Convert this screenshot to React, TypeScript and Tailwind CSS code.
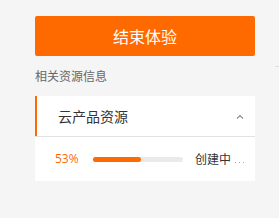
import React from 'react';

const cn = { fontFamily: '"Noto Sans CJK SC", "Noto Sans", sans-serif' };

const App: React.FC = () => {
  return (
    <div className="relative w-[279px] h-[218px] bg-[#f5f5f5] overflow-hidden" style={cn}>
      {/* bit of a divider peeking in from the right */}
      <div className="absolute right-0 top-[66px] w-[4px] h-px bg-[#dcdcdc]" />

      <div className="ml-[35px] w-[220px] pt-4">
        <button className="w-full h-10 rounded-[2px] bg-[#ff6a00] text-white text-base flex items-center justify-center">
          结束体验
        </button>

        <div className="mt-3 text-xs leading-4 text-[#666]">相关资源信息</div>

        <div className="mt-3 bg-white">
          <div className="h-10 border-l-2 border-[#ff6a00] pl-[21px] pr-[11px] flex items-center justify-between">
            <span className="text-sm text-[#333]">云产品资源</span>
            <svg width="8" height="5" viewBox="0 0 8 5" fill="none">
              <path d="M1 4.5L4 1.5L7 4.5" stroke="#8a8a8a" strokeWidth="1.1" />
            </svg>
          </div>
          <div className="h-px bg-[#e2e2e2]" />
          <div className="h-11 pl-5 flex items-center">
            <span className="w-[38px] text-xs text-[#ff6a00]" style={{ fontFamily: '"Open Sans", "Noto Sans", sans-serif' }}>53%</span>
            <div className="w-[90px] h-[5px] rounded-full bg-[#e9e9ee]">
              <div className="h-full rounded-full bg-[#ff6a00]" style={{ width: '53%' }} />
            </div>
            <span className="ml-3 text-xs text-[#333]">创建中</span>
            <span className="ml-1 mt-[6px] flex gap-[3px]">
              <i className="block w-px h-px bg-[#aaa]" />
              <i className="block w-px h-px bg-[#aaa]" />
              <i className="block w-px h-px bg-[#aaa]" />
            </span>
          </div>
        </div>
      </div>
    </div>
  );
};

export default App;
